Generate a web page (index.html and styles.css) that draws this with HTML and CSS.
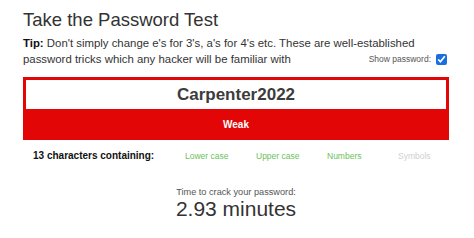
FILE: index.html
```html
<!DOCTYPE html>
<html lang="en">

<head>
    <meta charset="UTF-8">
    <meta name="viewport" content="width=device-width, initial-scale=1.0">
    <title>Password Test</title>
    <link rel="stylesheet" href="styles.css">
</head>

<body>
    <div class="pw-test">
        <h1 class="pw-title">Take the Password Test</h1>
        <p class="pw-tip">
            <b>Tip:</b> Don't simply change e's for 3's, a's for 4's etc. These are well-established password tricks which any hacker will be familiar with
            <label class="pw-show">Show password: <input type="checkbox" checked></label>
        </p>

        <!-- password box -->
        <div class="pw-box">
            <div class="pw-value">Carpenter2022</div>
            <div class="pw-strength">Weak</div>
        </div>

        <div class="pw-chars">
            <span class="pw-count">13 characters containing:</span>
            <span class="pw-flag on">Lower case</span>
            <span class="pw-flag on">Upper case</span>
            <span class="pw-flag on">Numbers</span>
            <span class="pw-flag">Symbols</span>
        </div>

        <div class="pw-time">
            <div class="pw-time-label">Time to crack your password:</div>
            <div class="pw-time-value">2.93 minutes</div>
        </div>
    </div>
</body>

</html>
```

FILE: styles.css
```css
body,
h1,
p,
div {
    margin: 0;
    padding: 0;
}

body {
    background-color: #fff;
    font-family: "Liberation Sans", Arial, sans-serif;
    color: #333;
}

.pw-test {
    width: 426px;
    padding: 10px 0 0 23px;
}

.pw-title {
    font-size: 18.5px;
    font-weight: normal;
    line-height: 20px;
    color: #333;
}

.pw-tip {
    margin-top: 5px;
    font-size: 11.4px;
    line-height: 16px;
    color: #333;
}

.pw-tip b {
    color: #111;
}

.pw-show {
    float: right;
    display: flex;
    align-items: center;
    height: 16px;
    font-size: 8.5px;
    color: #555;
}

.pw-show input {
    width: 11px;
    height: 11px;
    margin: 0 2px 0 5px;
    accent-color: #1a6fe0;
}

.pw-box {
    margin-top: 10px;
    border: 3px solid #e20606;
    background-color: #e20606;
}

.pw-value {
    height: 29px;
    line-height: 29px;
    background-color: #fff;
    text-align: center;
    font-size: 17px;
    font-weight: bold;
    color: #3c3c3c;
}

.pw-strength {
    height: 25px;
    padding-top: 3px;
    line-height: 25px;
    text-align: center;
    font-size: 10px;
    font-weight: bold;
    color: #fff;
}

.pw-chars {
    display: grid;
    grid-template-columns: 142px repeat(4, 71px);
    margin-top: 9px;
    line-height: 14px;
}

.pw-count {
    padding-left: 10px;
    font-size: 10px;
    font-weight: bold;
    color: #111;
}

.pw-flag {
    padding-left: 20px;
    font-size: 8.5px;
    color: #d0d0d0;
}

.pw-flag.on {
    color: #6cbf5c;
}

.pw-time {
    margin-top: 24px;
    text-align: center;
}

.pw-time-label {
    font-size: 9.2px;
    line-height: 11px;
    color: #555;
}

.pw-time-value {
    font-size: 21px;
    line-height: 21px;
    color: #333;
}
```
